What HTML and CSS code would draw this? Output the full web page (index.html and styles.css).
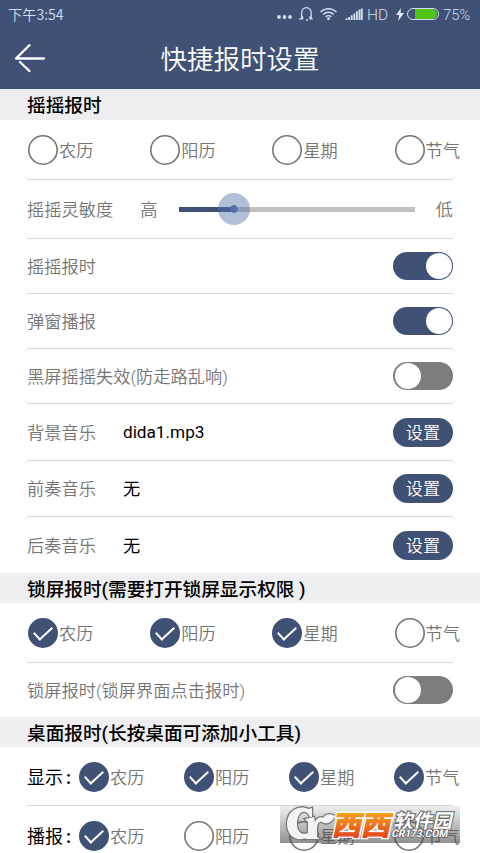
FILE: index.html
```html
<!DOCTYPE html>
<html lang="zh-CN">
<head>
  <meta charset="UTF-8">
  <title>快捷报时设置</title>
  <link rel="stylesheet" href="styles.css">
</head>
<body>

  <header class="header">
    <div class="status">
      <span class="time">下午3:54</span>
      <svg class="status-icons" width="88" height="16" viewBox="0 0 88 16">
        <g fill="#d3ddef">
          <circle cx="3" cy="11" r="1.9"/>
          <circle cx="8.5" cy="11" r="1.9"/>
          <circle cx="14" cy="11" r="1.9"/>
        </g>
        <!-- fone -->
        <path d="M23 12.8h2.6V7a4.8 5.4 0 0 1 9.6 0v5.8h1.4M26.6 10.2v3.2M34 10.2v3.2M30 14h2" fill="none" stroke="#d3ddef" stroke-width="1.3"/>
        <!-- wifi -->
        <g fill="none" stroke="#d3ddef" stroke-width="1.5">
          <path d="M44.6 6a11 11 0 0 1 15.8 0"/>
          <path d="M47.2 8.5a7.4 7.4 0 0 1 10.6 0"/>
          <path d="M49.7 10.9a4 4 0 0 1 5.6 0"/>
        </g>
        <circle cx="52.5" cy="12.7" r="1.4" fill="#d3ddef"/>
        <!-- sinal -->
        <path d="M70.5 14v-1.7M73.1 14v-3M75.7 14v-4.8M78.3 14v-6.6M80.9 14V5.2M83.5 14V3.6M85.8 14V2.6" stroke="#d3ddef" stroke-width="1.9"/>
      </svg>
      <span class="hd">HD</span>
      <svg class="bolt" width="8" height="13" viewBox="0 0 8 13"><path d="M5 0L0 7h3.2L2.2 13 8 5H4.5z" fill="#e3eaf5"/></svg>
      <span class="battery"><span class="battery-level"></span></span>
      <span class="percent">75%</span>
    </div>
    <div class="titlebar">
      <svg class="back" width="32" height="30" viewBox="0 0 32 30">
        <path d="M15.4 1.2L2 14.5h28M6 18l9.4 9" fill="none" stroke="#fff" stroke-width="2.3" stroke-linecap="round" stroke-linejoin="round"/>
      </svg>
      <h1>快捷报时设置</h1>
    </div>
  </header>

  <main>
    <h2 class="section">摇摇报时</h2>
    <div class="row options h60">
      <label class="option"><i class="circle"></i><span>农历</span></label>
      <label class="option"><i class="circle"></i><span>阳历</span></label>
      <label class="option"><i class="circle"></i><span>星期</span></label>
      <label class="option"><i class="circle"></i><span>节气</span></label>
    </div>
    <div class="row h59">
      <span class="label">摇摇灵敏度</span>
      <span class="high">高</span>
      <div class="slider"><div class="filled"></div><div class="thumb"></div></div>
      <span class="low">低</span>
    </div>
    <div class="row h55"><span class="label">摇摇报时</span><span class="switch on"></span></div>
    <div class="row h55"><span class="label">弹窗播报</span><span class="switch on"></span></div>
    <div class="row h55"><span class="label">黑屏摇摇失效(防走路乱响)</span><span class="switch"></span></div>
    <div class="row h57"><span class="label">背景音乐</span><span class="value file">dida1.mp3</span><button class="set">设置</button></div>
    <div class="row h56"><span class="label">前奏音乐</span><span class="value">无</span><button class="set">设置</button></div>
    <div class="row h56 last"><span class="label">后奏音乐</span><span class="value">无</span><button class="set">设置</button></div>

    <h2 class="section">锁屏报时(需要打开锁屏显示权限 )</h2>
    <div class="row options h60">
      <label class="option"><i class="circle checked"></i><span>农历</span></label>
      <label class="option"><i class="circle checked"></i><span>阳历</span></label>
      <label class="option"><i class="circle checked"></i><span>星期</span></label>
      <label class="option"><i class="circle"></i><span>节气</span></label>
    </div>
    <div class="row h54 last"><span class="label">锁屏报时(锁屏界面点击报时)</span><span class="switch"></span></div>

    <h2 class="section">桌面报时(长按桌面可添加小工具)</h2>
    <div class="row options desktop h59">
      <span class="group">显示<b>:</b></span>
      <label class="option"><i class="circle checked"></i><span>农历</span></label>
      <label class="option"><i class="circle checked"></i><span>阳历</span></label>
      <label class="option"><i class="circle checked"></i><span>星期</span></label>
      <label class="option"><i class="circle checked"></i><span>节气</span></label>
    </div>
    <div class="row options desktop h59 last">
      <span class="group">播报<b>:</b></span>
      <label class="option"><i class="circle checked"></i><span>农历</span></label>
      <label class="option"><i class="circle"></i><span>阳历</span></label>
      <label class="option"><i class="circle"></i><span>星期</span></label>
      <label class="option"><i class="circle"></i><span>节气</span></label>
    </div>
  </main>

  <div class="watermark">
    <svg width="180" height="38" viewBox="0 0 180 38">
      <defs>
        <linearGradient id="orange" x1="0" y1="0" x2="0" y2="1">
          <stop offset="0.2" stop-color="#f5a91c"/>
          <stop offset="0.85" stop-color="#e4451b"/>
        </linearGradient>
        <g id="logo">
          <path d="M32 5V2l-3 1C18-2 7 5 7 18c0 16 17 20 25 9l-2-1c-8 5-14-1-13-10C18 5 26 2 30 11h2z"/>
          <path d="M25 13l9-2 1 5c2-4 5-6 8-4 2-4 7-5 12-2-3 7-9 9-13 6-4-1-5 3-5 8v7l3 2H25l3-3V16z"/>
        </g>
      </defs>
      <use href="#logo" fill="#777" stroke="#777" stroke-width="2.5"/>
      <use href="#logo" fill="#f4f4f4"/>
      <g transform="skewX(-12)">
        <g class="wm-edge">
          <text x="58" y="29" textLength="29" lengthAdjust="spacingAndGlyphs">西</text>
          <text x="87" y="29" textLength="29" lengthAdjust="spacingAndGlyphs">西</text>
        </g>
        <g class="wm-xi">
          <text x="58" y="29" textLength="29" lengthAdjust="spacingAndGlyphs">西</text>
          <text x="87" y="29" textLength="29" lengthAdjust="spacingAndGlyphs">西</text>
        </g>
        <text class="wm-cn" x="118" y="22">软件园</text>
        <text class="wm-en" x="118" y="31.5" textLength="56" lengthAdjust="spacingAndGlyphs">CR173.COM</text>
      </g>
    </svg>
  </div>

</body>
</html>
```

FILE: styles.css
```css
:root {
  --azul: #3f5175;
  --cinza: #747474;
  --linha: #d6d6d6;
}

* {
  box-sizing: border-box;
}

body {
  margin: 0;
  height: 853px;
  position: relative;
  overflow: hidden;
  background: #fff;
  color: var(--cinza);
  font-family: Roboto, "Noto Sans CJK SC", sans-serif;
  font-size: 17.2px;
  font-weight: 350;
}

.header {
  height: 89px;
  background: var(--azul);
  color: #fff;
}

.status {
  display: flex;
  align-items: center;
  height: 28px;
  padding: 0 8px;
  font-size: 14px;
  line-height: 28px;
  color: #d3ddef;
}

.time {
  font-family: "Noto Sans CJK SC", sans-serif;
  font-size: 14.2px;
  padding-bottom: 1px;
}

.status-icons {
  margin-left: auto;
  margin-right: 3px;
}

.hd {
  width: 29px;
  padding-top: 1px;
  font-size: 15.5px;
}

.bolt {
  margin-right: 3px;
}

.battery {
  display: flex;
  justify-content: flex-end;
  width: 32px;
  height: 12px;
  padding: 0 1px;
  margin-right: 4px;
  border: 1px solid #d3ddef;
  border-radius: 6px;
}

.battery-level {
  width: 22px;
  background: #4fc414;
  border-radius: 0 5px 5px 0;
}

.percent {
  width: 29px;
  padding-top: 1px;
  font-size: 14.7px;
}

.titlebar {
  display: grid;
  grid-template-columns: 32px 1fr 32px;
  align-items: center;
  height: 61px;
  padding: 0 14px;
}

h1 {
  margin: 0;
  padding-top: 2px;
  text-align: center;
  font-size: 26.5px;
  font-weight: 350;
  line-height: 59px;
}

.section {
  height: 31px;
  margin: 0;
  padding-left: 27px;
  background: #eeeef0;
  color: #000;
  font-size: 18.65px;
  font-weight: 500;
  line-height: 35px;
}

.section:not(:first-child) {
  height: 30px;
  line-height: 34px;
}

.row {
  display: flex;
  align-items: center;
  margin: 0 27px;
  border-bottom: 1px solid var(--linha);
  white-space: nowrap;
}

.last {
  border-bottom: none;
}

.h54 { height: 54px; }
.h55 { height: 55px; }
.h56 { height: 56px; }
.h57 { height: 57px; }
.h59 { height: 59px; }
.h60 { height: 60px; }

.label,
.high,
.low,
.value,
.group,
.option span {
  padding-bottom: 2px;
}

.label {
  letter-spacing: 0.05px;
}

.options {
  display: grid;
  grid-template-columns: repeat(3, 122.2px) auto;
  margin-right: 15px;
  border-bottom: none;
  background: linear-gradient(var(--linha), var(--linha)) left bottom / 426px 1px no-repeat;
}

.options.last {
  background: none;
}

.desktop {
  grid-template-columns: 51px repeat(3, 105px) auto;
  padding-top: 1px;
}

.option {
  display: flex;
  align-items: center;
  gap: 1px;
  padding-left: 1px;
}

.circle {
  flex: none;
  width: 30px;
  height: 30px;
  border-radius: 50%;
  box-shadow: inset 0 0 0 1.6px var(--cinza);
}

.checked {
  display: flex;
  align-items: center;
  justify-content: center;
  background: var(--azul);
  box-shadow: none;
}

.checked::before {
  content: "";
  width: 16px;
  height: 8px;
  margin-top: -4px;
  border-left: 2px solid #fff;
  border-bottom: 2px solid #fff;
  transform: rotate(-43deg);
}

.group {
  color: #000;
  font-size: 18px;
  font-weight: 400;
}

.group b {
  margin-left: 3px;
}

.high {
  width: 39px;
  margin-left: 27px;
}

.slider {
  position: relative;
  width: 236px;
  height: 5px;
  background: #c1c1c1;
}

.filled {
  width: 56px;
  height: 5px;
  background: var(--azul);
}

.thumb {
  position: absolute;
  left: 39px;
  top: -14px;
  width: 32px;
  height: 32px;
  border-radius: 50%;
  background: radial-gradient(circle, #5271a8 3.5px, rgba(82, 113, 168, 0.45) 4.2px);
}

.low {
  margin-left: auto;
}

.switch {
  width: 60px;
  height: 28px;
  margin-left: auto;
  padding: 1px 1.5px;
  border-radius: 14px;
  background: #7d7d7d;
}

.switch::before {
  content: "";
  display: block;
  width: 26px;
  height: 26px;
  border-radius: 50%;
  background: #fff;
}

.on {
  background: var(--azul);
}

.on::before {
  margin-left: auto;
}

.value {
  margin-left: 27px;
  color: #000;
  font-weight: 400;
}

.file {
  padding-bottom: 0;
}

.set {
  width: 60px;
  height: 29px;
  margin-left: auto;
  padding: 0;
  border: none;
  border-radius: 15px;
  background: var(--azul);
  color: #fff;
  font: inherit;
  line-height: 30px;
}

.watermark {
  position: absolute;
  left: 280px;
  top: 806px;
  width: 180px;
  height: 37px;
  background: linear-gradient(rgba(100, 100, 100, 0.1), rgba(70, 70, 70, 0.6));
}

.watermark text {
  font-family: "Noto Sans CJK SC", sans-serif;
  font-weight: 700;
}

.wm-edge {
  fill: #fff;
  stroke: #fff;
  stroke-width: 4px;
  font-size: 27px;
}

.wm-xi {
  fill: url(#orange);
  stroke: url(#orange);
  stroke-width: 1.3px;
  font-size: 27px;
}

.wm-cn {
  font-size: 19.5px;
  fill: #fff;
  stroke: #666;
  stroke-width: 2px;
  paint-order: stroke;
}

.watermark .wm-en {
  font-family: Roboto, sans-serif;
  font-size: 10.5px;
  fill: #fff;
  stroke: #666;
  stroke-width: 1.5px;
  paint-order: stroke;
}
```
